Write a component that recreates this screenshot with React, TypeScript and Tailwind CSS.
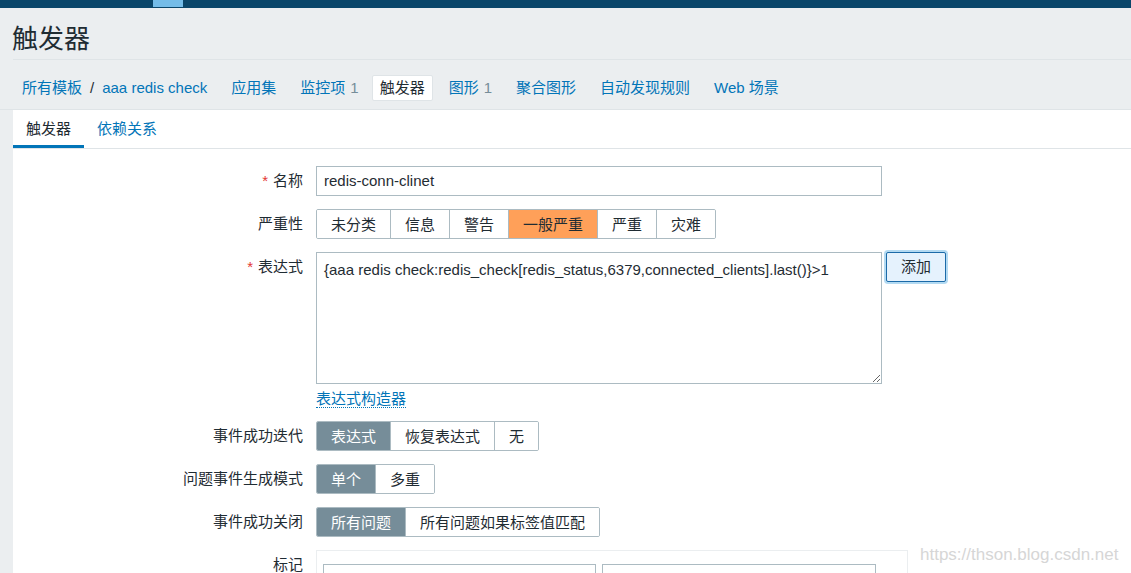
import React from 'react';

const FONT = { fontFamily: '"Liberation Sans", Arial, "Noto Sans CJK SC", sans-serif' };

type Seg = { label: string; active?: boolean; tone?: 'gray' | 'orange' };

function Segments({ items }: { items: Seg[] }) {
  return (
    <div className="flex h-[30px] w-fit overflow-hidden rounded-[2px] border border-[#acbbc2]">
      {items.map((it, i) => (
        <div
          key={it.label}
          className={[
            'flex items-center px-[14px] leading-none',
            i > 0 ? 'border-l border-[#acbbc2]' : '',
            it.active && it.tone === 'orange' ? 'bg-[#ffa059] text-[#1f2c33]' : '',
            it.active && it.tone !== 'orange' ? 'bg-[#768d99] text-white' : '',
            !it.active ? 'bg-white text-[#1f2c33]' : '',
          ].join(' ')}
        >
          {it.label}
        </div>
      ))}
    </div>
  );
}

function Label({ children, required }: { children: React.ReactNode; required?: boolean }) {
  return (
    <div className="flex h-[30px] items-center justify-end text-[#1f2c33]">
      {required && <span className="mr-[5px] text-[#e33734]">*</span>}
      {children}
    </div>
  );
}

export default function App() {
  const nav = [
    { t: '应用集' },
    { t: '监控项', n: '1' },
    { t: '触发器', active: true },
    { t: '图形', n: '1' },
    { t: '聚合图形' },
    { t: '自动发现规则' },
    { t: 'Web 场景' },
  ];

  return (
    <div className="relative h-[573px] w-full overflow-hidden bg-[#ebeef0] text-[15px]" style={FONT}>
      <div className="flex h-[8px] bg-[#0a466a] pl-[153px]">
        <div className="h-[7px] w-[30px] bg-[#74bce8]" />
      </div>

      <div className="ml-[13px] border-b border-[#dfe4e7] pb-[4px] pt-[15px]">
        <h1 className="text-[26px] leading-[32px] text-[#1f2c33]" style={{ marginLeft: -1 }}>
          触发器
        </h1>
      </div>

      <div className="flex h-[50px] items-center border-b border-[#dfe4e7] pl-[10px] pt-[7px] text-[#0275b8]">
        <div className="flex items-center px-3">
          <span>所有模板</span>
          <span className="mx-[8px] text-[#1f2c33]">/</span>
          <span>aaa redis check</span>
        </div>
        {nav.map((n) => (
          <div key={n.t} className="flex items-center px-3">
            {n.active ? (
              <span className="-ml-[11px] -mr-[8px] flex h-[26px] items-center rounded-[2px] border border-[#dfe4e7] bg-white px-[7px] text-[#1f2c33]">
                {n.t}
              </span>
            ) : (
              <span>
                {n.t}
                {n.n && <span className="ml-[5px] text-[#768d99]">{n.n}</span>}
              </span>
            )}
          </div>
        ))}
      </div>

      <div className="ml-[13px] bg-white">
        <div className="flex h-[39px] border-b border-[#dfe4e7]">
          <div className="flex items-center border-b-[3px] border-[#0275b8] px-[13px] pt-[3px] text-[#1f2c33]">触发器</div>
          <div className="flex items-center px-[13px] text-[#0275b8]">依赖关系</div>
        </div>

        <div className="grid grid-cols-[290px_auto] gap-x-[13px] gap-y-[13px] pt-[17px]">
          <Label required>名称</Label>
          <div className="flex h-[30px] w-[566px] items-center border border-[#acbbc2] px-[7px] text-[#1f2c33]">
            redis-conn-clinet
          </div>

          <Label>严重性</Label>
          <Segments
            items={[
              { label: '未分类' },
              { label: '信息' },
              { label: '警告' },
              { label: '一般严重', active: true, tone: 'orange' },
              { label: '严重' },
              { label: '灾难' },
            ]}
          />

          <Label required>表达式</Label>
          <div>
            <div className="flex items-start gap-[4px]">
              <textarea
                readOnly
                value="{aaa redis check:redis_check[redis_status,6379,connected_clients].last()}>1"
                className="h-[132px] w-[566px] border border-[#acbbc2] px-[7px] py-[6px] text-[15px] text-[#1f2c33] outline-none"
                style={FONT}
              />
              <div className="flex h-[30px] w-[60px] items-center justify-center rounded-[2px] border border-[#1b6aa8] bg-[#e5f2fd] text-[#1f2c33] shadow-[0_0_0_2px_rgba(116,188,232,0.55)]">
                添加
              </div>
            </div>
            <div className="mt-[6px] w-fit border-b border-dotted border-[#0275b8] leading-[17px] text-[#0275b8]">
              表达式构造器
            </div>
          </div>

          <Label>事件成功迭代</Label>
          <Segments items={[{ label: '表达式', active: true }, { label: '恢复表达式' }, { label: '无' }]} />

          <Label>问题事件生成模式</Label>
          <Segments items={[{ label: '单个', active: true }, { label: '多重' }]} />

          <Label>事件成功关闭</Label>
          <Segments items={[{ label: '所有问题', active: true }, { label: '所有问题如果标签值匹配' }]} />

          <Label>标记</Label>
          <div className="h-[60px] w-[592px] border border-[#ebeef0] px-[6px] pt-[13px]">
            <div className="flex gap-[6px]">
              <div className="h-[30px] w-[273px] border border-[#acbbc2]" />
              <div className="h-[30px] w-[274px] border border-[#acbbc2]" />
            </div>
          </div>
        </div>
      </div>

      <div className="absolute left-[920px] top-[542px] text-[17px] text-[#d6d6d6]">https://thson.blog.csdn.net</div>
    </div>
  );
}
